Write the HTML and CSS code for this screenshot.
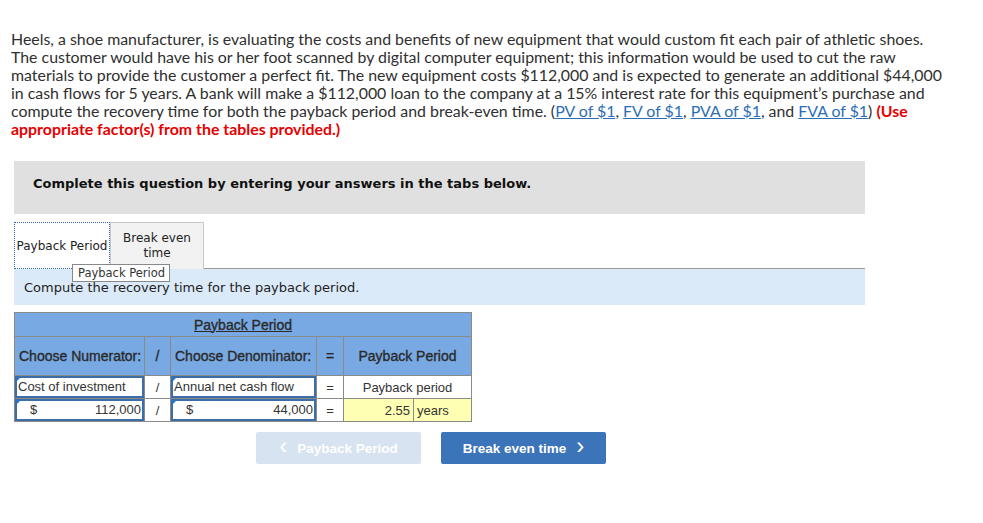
FILE: index.html
```html
<!DOCTYPE html>
<html lang="en">
<head>
  <meta charset="UTF-8">
  <title>Payback Period</title>
  <link rel="stylesheet" href="styles.css">
</head>
<body>
  <p class="question">
    Heels, a shoe manufacturer, is evaluating the costs and benefits of new equipment that would custom fit each pair of athletic shoes.<br>
    The customer would have his or her foot scanned by digital computer equipment; this information would be used to cut the raw<br>
    materials to provide the customer a perfect fit. The new equipment costs $112,000 and is expected to generate an additional $44,000<br>
    in cash flows for 5 years. A bank will make a $112,000 loan to the company at a 15% interest rate for this equipment&rsquo;s purchase and<br>
    compute the recovery time for both the payback period and break-even time. (<a href="javascript:;">PV of $1</a>, <a href="javascript:;">FV of $1</a>, <a href="javascript:;">PVA of $1</a>, and <a href="javascript:;">FVA of $1</a>) <b class="warn">(Use<br>
    appropriate factor(s) from the tables provided.)</b>
  </p>

  <div class="notice">Complete this question by entering your answers in the tabs below.</div>

  <div class="tabs">
    <div class="tab active">Payback Period</div>
    <div class="tab">Break even<br>time</div>
    <div class="tabline"></div>
    <span class="tip">Payback Period</span>
  </div>
  <div class="instr">Compute the recovery time for the payback period.</div>

  <table class="calc">
    <colgroup>
      <col class="w1"><col class="w2"><col class="w3"><col class="w4"><col class="w5"><col class="w6">
    </colgroup>
    <tr class="head">
      <th colspan="6"><u>Payback Period</u></th>
    </tr>
    <tr class="head sub">
      <th class="lft">Choose Numerator:</th>
      <th>/</th>
      <th class="lft">Choose Denominator:</th>
      <th>=</th>
      <th colspan="2">Payback Period</th>
    </tr>
    <tr>
      <td class="inp"><div class="box">Cost of investment</div></td>
      <td class="op">/</td>
      <td class="inp"><div class="box">Annual net cash flow</div></td>
      <td class="op">=</td>
      <td class="res" colspan="2">Payback period</td>
    </tr>
    <tr>
      <td class="inp"><div class="box num"><span>$</span><span>112,000</span></div></td>
      <td class="op">/</td>
      <td class="inp"><div class="box num"><span>$</span><span>44,000</span></div></td>
      <td class="op">=</td>
      <td class="ans">2.55</td>
      <td class="unit">years</td>
    </tr>
  </table>

  <div class="navbtns">
    <a class="btn off" href="javascript:;"><span class="arr">&lsaquo;</span> Payback Period</a>
    <a class="btn" href="javascript:;">Break even time <span class="arr">&rsaquo;</span></a>
  </div>
</body>
</html>
```
FILE: styles.css
```css
body {
  margin: 0;
  padding: 0 0 0 11px;
  background: #fff;
  color: #333;
  font-family: Lato, "Open Sans", sans-serif;
}
.question {
  margin: 0;
  padding-top: 30px;
  font-size: 15.9px;
  line-height: 18px;
  color: #2f2f2f;
}
.question a {
  color: #2c6db5;
  text-decoration: underline;
}
.question .warn {
  color: #e60000;
}
.notice {
  width: 851px;
  height: 53px;
  margin: 23px 0 0 3px;
  box-sizing: border-box;
  padding: 15px 0 0 19px;
  background: #e0e0e0;
  font-family: "DejaVu Sans", Verdana, sans-serif;
  font-size: 13px;
  font-weight: bold;
  color: #111;
}
.tabs {
  position: relative;
  display: flex;
  align-items: flex-end;
  width: 851px;
  margin: 8px 0 0 3px;
  height: 47px;
  font-family: "DejaVu Sans", Verdana, sans-serif;
  font-size: 12px;
  color: #222;
}
.tab {
  box-sizing: border-box;
  height: 47px;
  display: flex;
  align-items: center;
  justify-content: center;
  text-align: center;
  line-height: 15px;
}
.tab.active {
  width: 96px;
  padding-top: 2px;
  background: #fff;
  outline: 1px dotted #2f6bb0;
  outline-offset: -1px;
  border: 1px dotted #2f6bb0;
}
.tab + .tab {
  width: 94px;
  background: #f2f2f2;
  border: 1px solid #c8c8c8;
  border-bottom: none;
}
.tabline {
  flex: 1;
  border-bottom: 1px solid #9a9a9a;
}
.tip {
  position: absolute;
  left: 58px;
  top: 42px;
  padding: 1px 4px 1px 5px;
  background: #fff;
  border: 1px solid #888;
  font-size: 11.5px;
  color: #333;
  z-index: 2;
}
.instr {
  width: 851px;
  margin-left: 3px;
  box-sizing: border-box;
  height: 36px;
  padding: 11px 0 0 10px;
  background: #dbeaf8;
  font-family: "DejaVu Sans", Verdana, sans-serif;
  font-size: 13px;
  color: #222;
}
.calc {
  margin: 7px 0 0 3px;
  border-collapse: collapse;
  table-layout: fixed;
  width: 457px;
  font-family: "Liberation Sans", Arial, sans-serif;
  font-size: 13px;
  color: #333;
}
.calc .w1 { width: 130px; }
.calc .w2 { width: 26px; }
.calc .w3 { width: 146px; }
.calc .w4 { width: 27px; }
.calc .w5 { width: 70px; }
.calc .w6 { width: 58px; }
.calc th,
.calc td {
  border: 1px solid #8a8a8a;
  padding: 0;
  white-space: nowrap;
}
.calc .head th {
  background: #78a9e2;
  height: 23px;
  font-size: 14px;
  font-weight: normal;
  color: #2a2a2a;
  -webkit-text-stroke: 0.35px #2a2a2a;
}
.calc .sub th {
  height: 38px;
}
.calc .sub th.lft {
  text-align: left;
  padding-left: 4px;
}
.calc td {
  height: 20px;
  text-align: center;
}
.box {
  position: relative;
  height: 18px;
  line-height: 18px;
  border: 2px solid #3b6ea8;
  text-align: left;
  padding-left: 1px;
}
.box::before {
  content: "";
  position: absolute;
  left: -1px;
  top: -1px;
  border-top: 5px solid #2d73c5;
  border-right: 5px solid transparent;
}
.box.num {
  display: flex;
  justify-content: space-between;
  padding: 0 1px 0 13px;
}
.calc td.ans {
  background: #ffffb3;
  text-align: right;
  padding-right: 3px;
}
.calc td.unit {
  background: #ffffb3;
  text-align: left;
  padding-left: 3px;
}
.navbtns {
  display: flex;
  gap: 20px;
  margin: 10px 0 0 245px;
}
.btn {
  display: flex;
  align-items: center;
  justify-content: center;
  gap: 10px;
  width: 165px;
  height: 32px;
  border-radius: 2px;
  background: #3b74b8;
  color: #fff;
  text-decoration: none;
  font-family: "Liberation Sans", Arial, sans-serif;
  font-size: 13.5px;
  font-weight: bold;
}
.btn.off {
  background: #d7e3f1;
}
.arr {
  font-size: 24px;
  font-weight: normal;
  line-height: 1;
  margin-top: -4px;
}
```
